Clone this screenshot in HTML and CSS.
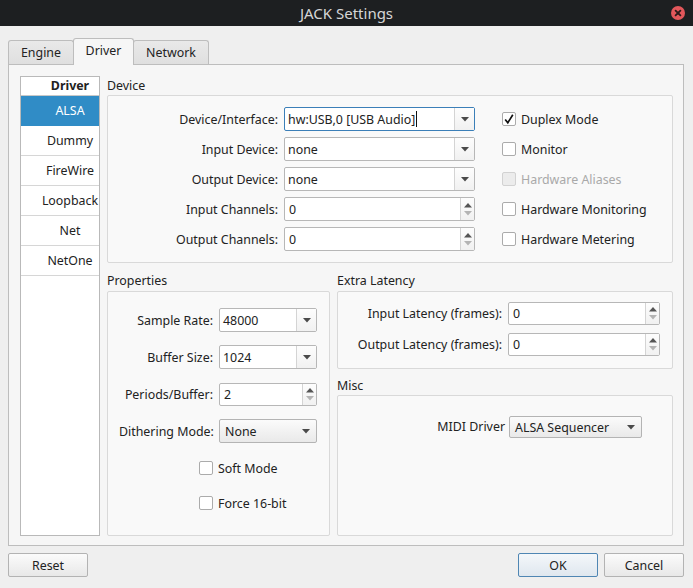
FILE: index.html
```html
<!DOCTYPE html>
<html>
<head>
<meta charset="utf-8">
<title>JACK Settings</title>
<link rel="stylesheet" href="styles.css">
</head>
<body>
<div class="titlebar">
  <span class="title">JACK Settings</span>
  <svg class="close" width="14" height="14" viewBox="0 0 14 14"><circle cx="7" cy="7" r="7" fill="#e2575b"/><path d="M4.6 4.6L9.4 9.4M9.4 4.6L4.6 9.4" stroke="#2a1a1a" stroke-width="1.8" stroke-linecap="round"/></svg>
</div>
<div class="content">
  <div class="tabs">
    <div class="tab tab-engine">Engine</div>
    <div class="tab tab-driver active">Driver</div>
    <div class="tab tab-network">Network</div>
  </div>
  <div class="pane">
    <div class="drivers">
      <div class="drv-head">Driver</div>
      <div class="drv-row selected">ALSA</div>
      <div class="drv-row">Dummy</div>
      <div class="drv-row">FireWire</div>
      <div class="drv-row">Loopback</div>
      <div class="drv-row">Net</div>
      <div class="drv-row">NetOne</div>
    </div>
    <div class="main">
      <div class="section-label">Device</div>
      <div class="group device-group">
        <div class="form device-form">
          <label>Device/Interface:</label>
          <div class="combo edit focus"><span class="val">hw:USB,0 [USB Audio]<span class="caret"></span></span><span class="cbtn"><svg width="8" height="5" viewBox="0 0 8 5"><path d="M0 0H8L4 4.5Z" fill="#4a4a4a"/></svg></span></div>
          <label>Input Device:</label>
          <div class="combo edit"><span class="val">none</span><span class="cbtn"><svg width="8" height="5" viewBox="0 0 8 5"><path d="M0 0H8L4 4.5Z" fill="#4a4a4a"/></svg></span></div>
          <label>Output Device:</label>
          <div class="combo edit"><span class="val">none</span><span class="cbtn"><svg width="8" height="5" viewBox="0 0 8 5"><path d="M0 0H8L4 4.5Z" fill="#4a4a4a"/></svg></span></div>
          <label>Input Channels:</label>
          <div class="spin"><span class="val">0</span><span class="sbtn"><svg width="8" height="5" viewBox="0 0 8 5"><path d="M0 4.5H8L4 0Z" fill="#555"/></svg><svg width="8" height="5" viewBox="0 0 8 5"><path d="M0 0H8L4 4.5Z" fill="#b4b4b4"/></svg></span></div>
          <label>Output Channels:</label>
          <div class="spin"><span class="val">0</span><span class="sbtn"><svg width="8" height="5" viewBox="0 0 8 5"><path d="M0 4.5H8L4 0Z" fill="#555"/></svg><svg width="8" height="5" viewBox="0 0 8 5"><path d="M0 0H8L4 4.5Z" fill="#b4b4b4"/></svg></span></div>
        </div>
        <div class="checks">
          <div class="check"><span class="cb"><svg width="12" height="12" viewBox="0 0 12 12"><path d="M2.2 6.4L4.8 9.8L9.8 1.8" fill="none" stroke="#111" stroke-width="1.7"/></svg></span>Duplex Mode</div>
          <div class="check"><span class="cb"></span>Monitor</div>
          <div class="check disabled"><span class="cb"></span>Hardware Aliases</div>
          <div class="check"><span class="cb"></span>Hardware Monitoring</div>
          <div class="check"><span class="cb"></span>Hardware Metering</div>
        </div>
      </div>
      <div class="lower">
        <div class="col">
          <div class="section-label lbl-gap">Properties</div>
          <div class="group props-group">
            <div class="form props-form">
              <label>Sample Rate:</label>
              <div class="combo edit"><span class="val">48000</span><span class="cbtn"><svg width="8" height="5" viewBox="0 0 8 5"><path d="M0 0H8L4 4.5Z" fill="#4a4a4a"/></svg></span></div>
              <label>Buffer Size:</label>
              <div class="combo edit"><span class="val">1024</span><span class="cbtn"><svg width="8" height="5" viewBox="0 0 8 5"><path d="M0 0H8L4 4.5Z" fill="#4a4a4a"/></svg></span></div>
              <label>Periods/Buffer:</label>
              <div class="spin short"><span class="val">2</span><span class="sbtn"><svg width="8" height="5" viewBox="0 0 8 5"><path d="M0 4.5H8L4 0Z" fill="#555"/></svg><svg width="8" height="5" viewBox="0 0 8 5"><path d="M0 0H8L4 4.5Z" fill="#b4b4b4"/></svg></span></div>
              <label>Dithering Mode:</label>
              <div class="combo button"><span class="val">None</span><svg width="8" height="5" viewBox="0 0 8 5"><path d="M0 0H8L4 4.5Z" fill="#4a4a4a"/></svg></div>
            </div>
            <div class="prop-checks">
              <div class="check"><span class="cb"></span>Soft Mode</div>
              <div class="check"><span class="cb"></span>Force 16-bit</div>
            </div>
          </div>
        </div>
        <div class="col">
          <div class="section-label lbl-gap">Extra Latency</div>
          <div class="group latency-group">
            <div class="form latency-form">
              <label>Input Latency (frames):</label>
              <div class="spin short"><span class="val">0</span><span class="sbtn"><svg width="8" height="5" viewBox="0 0 8 5"><path d="M0 4.5H8L4 0Z" fill="#555"/></svg><svg width="8" height="5" viewBox="0 0 8 5"><path d="M0 0H8L4 4.5Z" fill="#b4b4b4"/></svg></span></div>
              <label>Output Latency (frames):</label>
              <div class="spin short"><span class="val">0</span><span class="sbtn"><svg width="8" height="5" viewBox="0 0 8 5"><path d="M0 4.5H8L4 0Z" fill="#555"/></svg><svg width="8" height="5" viewBox="0 0 8 5"><path d="M0 0H8L4 4.5Z" fill="#b4b4b4"/></svg></span></div>
            </div>
          </div>
          <div class="section-label misc-label">Misc</div>
          <div class="group misc-group">
            <label>MIDI Driver</label>
            <div class="combo button midi"><span class="val">ALSA Sequencer</span><svg width="8" height="5" viewBox="0 0 8 5"><path d="M0 0H8L4 4.5Z" fill="#4a4a4a"/></svg></div>
          </div>
        </div>
      </div>
    </div>
  </div>
  <div class="footer">
    <div class="btn">Reset</div>
    <div class="spacer"></div>
    <div class="btn default">OK</div>
    <div class="btn">Cancel</div>
  </div>
</div>
</body>
</html>
```
FILE: styles.css
```css
* { box-sizing: border-box; }
html, body { margin: 0; padding: 0; }
body {
  width: 693px;
  height: 588px;
  overflow: hidden;
  background: #efefef;
  font-family: "Noto Sans", "Open Sans", sans-serif;
  font-size: 12.4px;
  color: #222;
}
.titlebar {
  height: 26px;
  background: #1d1f21;
  color: #d6d6d6;
  font-size: 15px;
  display: flex;
  align-items: center;
  justify-content: center;
  position: relative;
}
.close { position: absolute; right: 8px; top: 6px; }
.content { padding: 12px 9px 0 8px; }
.tabs {
  display: flex;
  align-items: flex-end;
  height: 26px;
}
.tab {
  height: 24px;
  border: 1px solid #bdbdbd;
  border-bottom: none;
  border-radius: 3px 3px 0 0;
  background: linear-gradient(#e9e9e9, #dfdfdf);
  display: flex;
  align-items: center;
  justify-content: center;
  padding-bottom: 1px;
}
.tab-engine { width: 66px; margin-right: -1px; }
.tab-driver { width: 61px; }
.tab-network { width: 76px; margin-left: -1px; }
.tab.active {
  height: 27px;
  margin-bottom: -1px;
  background: #f6f6f6;
  position: relative;
  z-index: 1;
  padding-bottom: 3px;
}
.pane {
  height: 482px;
  background: #f6f6f6;
  border: 1px solid #bdbdbd;
  display: flex;
  gap: 7px;
  padding: 11px 10px 9px 11px;
}
.drivers {
  width: 80px;
  background: #fff;
  border: 1px solid #b9b9b9;
  flex: none;
}
.drv-head {
  height: 19px;
  border-bottom: 1px solid #c8c8c8;
  font-weight: bold;
  display: flex;
  align-items: center;
  justify-content: center;
  padding-left: 20px;
  line-height: 1;
}
.drv-row {
  height: 30px;
  border-bottom: 1px solid #d6d6d6;
  display: flex;
  align-items: center;
  justify-content: center;
  padding-left: 20px;
}
.drv-row.selected { background: #308cc6; color: #fff; border-bottom-color: #308cc6; }
.main {
  flex: 1;
  display: flex;
  flex-direction: column;
  min-width: 0;
}
.section-label {
  height: 19px;
  line-height: 19px;
  flex: none;
}
.lbl-gap { height: 20px; line-height: 19px; }
.group {
  border: 1px solid #d9d9d9;
  border-radius: 2px;
  background: #f9f9f9;
}
.device-group {
  height: 168px;
  display: flex;
  align-items: flex-start;
  padding: 11px 0 0 0;
  flex: none;
}
.form {
  display: grid;
  column-gap: 6px;
  align-items: center;
}
.form label { text-align: right; white-space: nowrap; }
.device-form {
  grid-template-columns: 170px 191px;
  grid-auto-rows: 24px;
  row-gap: 6px;
}
.combo, .spin {
  height: 24px;
  border: 1px solid #b7b7b7;
  border-radius: 2px;
  background: #fff;
  display: flex;
  align-items: stretch;
}
.combo .val, .spin .val {
  flex: 1;
  display: flex;
  align-items: center;
  padding-left: 3px;
  white-space: nowrap;
}
.spin .val { padding-left: 4px; }
.combo.focus { border-color: #3b7fb8; }
.caret { display: inline-block; width: 1px; height: 16px; background: #111; margin-left: 1px; }
.cbtn {
  width: 20px;
  border-left: 1px solid #d4d4d4;
  display: flex;
  align-items: center;
  justify-content: center;
  background: linear-gradient(#fdfdfd, #f1f1f1);
}
.sbtn {
  width: 14px;
  border-left: 1px solid #d4d4d4;
  display: flex;
  flex-direction: column;
  align-items: center;
  justify-content: center;
  gap: 3px;
  background: linear-gradient(#fdfdfd, #f1f1f1);
}
.spin.short { height: 23px; }
.combo.button {
  background: linear-gradient(#fbfbfb, #e9e9e9);
  border-color: #b4b4b4;
  align-items: center;
  padding-right: 6px;
}
.combo.button .val { padding-left: 5px; }
.checks {
  margin-left: 27px;
  display: flex;
  flex-direction: column;
  gap: 6px;
}
.check {
  height: 24px;
  display: flex;
  align-items: center;
  white-space: nowrap;
}
.cb {
  width: 14px;
  height: 14px;
  border: 1px solid #ababab;
  border-radius: 2px;
  background: #fff;
  margin-right: 5px;
  display: flex;
  align-items: center;
  justify-content: center;
  flex: none;
}
.check.disabled { color: #a9a9a9; }
.check.disabled .cb { background: #ececec; border-color: #d2d2d2; }
.lower {
  flex: 1;
  display: flex;
  gap: 7px;
  margin-top: 8px;
}
.col {
  display: flex;
  flex-direction: column;
}
.col:first-child { width: 223px; }
.col:last-child { flex: 1; }
.props-group {
  flex: 1;
  padding: 16px 0 0 11px;
}
.props-form {
  grid-template-columns: 94px 98px;
  grid-auto-rows: 24px;
  row-gap: 13px;
}
.prop-checks {
  margin-top: 13px;
  margin-left: 80px;
  display: flex;
  flex-direction: column;
  gap: 11px;
}
.latency-group {
  height: 78px;
  padding: 10px 12px 0 0;
  flex: none;
}
.latency-form {
  grid-template-columns: auto 152px;
  grid-auto-rows: 23px;
  row-gap: 8px;
  justify-content: end;
}
.misc-label { margin-top: 7px; }
.misc-group {
  flex: 1;
  display: flex;
  align-items: flex-start;
  justify-content: flex-end;
  gap: 4px;
  padding: 20px 30px 0 0;
}
.misc-group label { height: 22px; line-height: 22px; }
.combo.midi { width: 133px; height: 22px; }
.footer {
  display: flex;
  margin-top: 7px;
  gap: 6px;
}
.spacer { flex: 1; }
.btn {
  width: 80px;
  height: 24px;
  border: 1px solid #b3b3b3;
  border-radius: 2px;
  background: linear-gradient(#fbfbfb, #e8e8e8);
  display: flex;
  align-items: center;
  justify-content: center;
}
.btn.default {
  border-color: #4f86b3;
  background: linear-gradient(#f4f7fa, #dfe7ef);
}
```
